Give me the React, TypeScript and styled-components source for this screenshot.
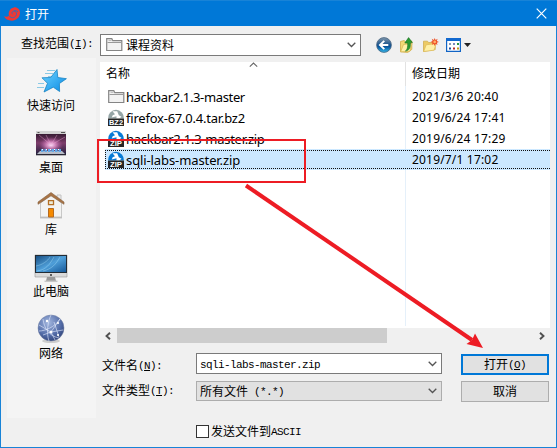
import React from "react";
import styled, { createGlobalStyle } from "styled-components";

const Global = createGlobalStyle`
  * { box-sizing: border-box; }
  html, body { margin: 0; padding: 0; overflow: hidden; }
  body { font: 12px/16px "Noto Sans CJK SC", sans-serif; color: #000; }
  svg { display: block; flex: none; }
`;

const Dialog = styled.div`
  position: relative;
  width: 557px;
  height: 448px;
  background: #f0f0f0;
  border: 1px solid #1883d7;
  border-top: 0;
  display: flex;
  flex-direction: column;
`;

const TitleBar = styled.header`
  height: 26px;
  margin: 0 -1px;
  border-top: 1px solid #1883d7;
  background: #0078d7;
  color: #fff;
  display: flex;
  align-items: center;
  padding: 0 10px 0 4px;
  flex: none;
`;

const Title = styled.span`
  flex: 1;
  margin-left: 4px;
`;

const Toolbar = styled.div`
  height: 32px;
  padding: 8px 0 0 20px;
  display: flex;
  flex: none;
`;

const LookLabel = styled.label`
  width: 79px;
  line-height: 18px;
  white-space: nowrap;
`;

const Combo = styled.div<{ $w: number; $h: number; $muted?: boolean }>`
  width: ${(p) => p.$w}px;
  height: ${(p) => p.$h}px;
  background: ${(p) => (p.$muted ? "#e1e1e1" : "#fff")};
  border: 1px solid ${(p) => (p.$muted ? "#adadad" : "#7a7a7a")};
  display: flex;
  align-items: center;
  padding: 0 4px 0 3px;
  flex: none;
`;

const ComboText = styled.span`
  flex: 1;
  white-space: pre;
  line-height: 16px;
`;

const PathValue = styled.span`
  flex: 1;
  display: flex;
  align-items: center;
  gap: 3px;
  padding-left: 2px;
`;

const Tools = styled.div`
  display: flex;
  gap: 7px;
  margin: 3px 0 0 15px;
  height: 16px;
`;

const Latin = styled.span`
  font-family: "Liberation Mono", monospace;
  font-size: 11px;
  line-height: 1;
  letter-spacing: -0.6px;
  vertical-align: 1px;
  white-space: pre;
  u { text-underline-offset: 1px; }
`;

const Body = styled.div`
  display: flex;
  gap: 4px;
  padding-left: 6px;
`;

const Places = styled.nav`
  width: 89px;
  height: 360px;
  background: #f4f4f4;
  padding: 7px 1px 0 0;
`;

const Place = styled.div`
  height: 62px;
  display: flex;
  flex-direction: column;
  align-items: center;
`;

const Content = styled.main`
  width: 450px;
  padding-top: 4px;
`;

const FileList = styled.div`
  height: 266px;
  background: linear-gradient(#e5f0fa, #e5f0fa) 305px 24px / 1px 240px no-repeat #fff;
`;

const ListHeader = styled.div`
  height: 24px;
  display: flex;
  padding-left: 6px;
  background: linear-gradient(#e2e2e2, #e2e2e2) 305px 0 / 1px 24px no-repeat;
`;

const HeadName = styled.div`
  width: 306px;
  display: flex;
  line-height: 22px;
  svg { margin: 0 0 0 119px; }
`;

const HeadDate = styled.div`
  line-height: 22px;
`;

const FileRow = styled.div<{ $selected?: boolean }>`
  height: 21px;
  margin-left: 5px;
  padding-left: 3px;
  display: flex;
  align-items: center;
  font: 13px/20px "Noto Sans", sans-serif;
  ${(p) =>
    p.$selected &&
    `background:
      repeating-linear-gradient(90deg, #111 0 1px, transparent 1px 2px) 0 1px / 100% 1px no-repeat,
      repeating-linear-gradient(90deg, #111 0 1px, transparent 1px 2px) 0 19px / 100% 1px no-repeat,
      repeating-linear-gradient(180deg, #111 0 1px, transparent 1px 2px) 0 1px / 1px 18px no-repeat,
      #cce8ff;`}
`;

const IconCell = styled.span`
  width: 18px;
  flex: none;
`;

const FileName = styled.span<{ $spacing: number }>`
  width: 286px;
  white-space: nowrap;
  letter-spacing: ${(p) => p.$spacing}px;
`;

const FileDate = styled.span`
  font-size: 12px;
  letter-spacing: 0.18px;
  white-space: nowrap;
`;

const Scrollbar = styled.div`
  height: 15px;
  display: flex;
  align-items: center;
  padding: 0 5px;
`;

const Thumb = styled.div`
  width: 270px;
  height: 15px;
  background: #cdcdcd;
  margin: 0 auto 0 6px;
`;

const Form = styled.div`
  display: grid;
  grid-template-columns: 96px 265px 89px;
  grid-template-rows: 28px 43px 14px;
  padding-top: 10px;
`;

const FieldLabel = styled.label<{ $top: number }>`
  padding: ${(p) => p.$top}px 0 0 2px;
  line-height: 16px;
  white-space: nowrap;
`;

const Button = styled.button<{ $primary?: boolean }>`
  width: 88px;
  height: 21px;
  margin: ${(p) => (p.$primary ? 1 : 0)}px 0 0;
  padding: 0 0 1px;
  background: #e1e1e1;
  border: ${(p) => (p.$primary ? "2px solid #0078d7" : "1px solid #adadad")};
  font: 12px/16px "Noto Sans CJK SC", sans-serif;
  color: #000;
`;

const CheckLabel = styled.label`
  grid-column: 2;
  display: flex;
  align-items: center;
  gap: 2px;
  white-space: nowrap;
`;

const CheckBox = styled.span`
  width: 13px;
  height: 13px;
  background: #fff;
  border: 1px solid #333;
`;

const Annotation = styled.svg`
  position: absolute;
  left: -1px;
  top: 0;
  pointer-events: none;
`;

const Chevron = () => (
  <svg width="9" height="6" viewBox="0 0 9 6">
    <path d="M.7 .8 4.5 4.5 8.3 .8" fill="none" stroke="#555" strokeWidth="1.3" />
  </svg>
);

const Folder = () => (
  <svg width="17" height="16" viewBox="0 0 17 16">
    <path d="M.7 13.5V1.7h5.1l1 2h9v9.8z" fill="#f2f2f2" stroke="#858585" strokeWidth="1.2" />
    <path d="M1.5 5.5h13.8" stroke="#999" />
    <path d="M2.5 3.4h3" stroke="#bbb" />
  </svg>
);

const Archive = ({ kind, color }: { kind: string; color: string }) => (
  <svg width="16" height="17" viewBox="0 0 16 17">
    <path d="M.3 9.5A7.8 7.8 0 0 1 8 .8 7.8 7.8 0 0 1 15.7 9.5z" fill={color} />
    <path d="M4.5 2.2h4.7l1.600 4 2.700 1.600-2.500 2H8.500V7.300L3.700 8.500l1-2.200 2.300-1z" fill="#fff" />
    <path d="M0 9.500h16V17H0z" fill="#262626" />
    <text x="8" y="15.900" textAnchor="middle" fontFamily="Liberation Sans" fontWeight="700" fontSize="7.500" fill="#fff" textLength={kind === "ZIP" ? 12 : 14} lengthAdjust="spacingAndGlyphs">
      {kind}
    </text>
  </svg>
);

const AppLogo = () => (
  <svg width="17" height="14" viewBox="0 0 17 14">
    <path d="M0 9.3C1.8 10 3.7 9.8 5 8.8 3.9 5.5 5.8 1 10 .4c3.300-.4 6 2 6 5.300 0 4.300-3.700 8-8.200 8C4 13.700 1.200 12 0 9.300z" fill="#ef3834" />
    <path d="M5.4 8.9c1.500 2.600 5.200 2.300 6.700-.4 1.200-2.300-.4-4.800-2.500-4.400-1.700.4-2.100 2.300-.8 3.200M9.800 4c1.500-.8 3.200-.3 4.200 1" fill="none" stroke="#2d6fba" strokeWidth=".9" />
  </svg>
);

const CloseIcon = () => (
  <svg width="11" height="11" viewBox="0 0 11 11">
    <path d="M.7 .7 10.3 10.3M10.3 .7 .7 10.3" stroke="#fff" strokeWidth="1.2" />
  </svg>
);

const BackIcon = () => (
  <svg width="16" height="16" viewBox="0 0 16 16">
    <defs>
      <linearGradient id="back" x2="0" y2="1">
        <stop stopColor="#8298ad" />
        <stop offset=".45" stopColor="#22598f" />
        <stop offset=".6" stopColor="#07539b" />
        <stop offset="1" stopColor="#35b9ec" />
      </linearGradient>
    </defs>
    <circle cx="8" cy="8" r="7.4" fill="url(#back)" stroke="#4b6680" strokeWidth=".8" />
    <path d="M8.3 3.9 4 8l4.3 4.1M4.7 8h7.6" fill="none" stroke="#fff" strokeWidth="2" />
  </svg>
);

const UpIcon = () => (
  <svg width="16" height="16" viewBox="0 0 16 16">
    <path d="M1.5 14.8V4.5l3.8-1 1 1.5 6.5-1v8.4l-4 3z" fill="#f3d976" stroke="#cfac48" strokeWidth=".8" />
    <path d="M1.6 14.8 4.5 7.5l8.5-1-2.3 8z" fill="#fff0a8" stroke="#d5b34c" strokeWidth=".7" />
    <path d="M6.4 14c2.100-1.300 2.400-4 2.300-8H5.800L9.600 .6 13.400 5.600h-2c.2 4.800-.8 8-5 8.400z" fill="#2c9931" stroke="#15701e" strokeWidth=".6" />
  </svg>
);

const NewIcon = () => (
  <svg width="17" height="16" viewBox="0 0 17 16">
    <path d="M1.5 14.5V4.2h4l1 1.3h6.7v7.1z" fill="#edca64" stroke="#d1ae52" strokeWidth=".8" />
    <path d="M1.6 14.5 4.2 7.8l10-1.3-2.2 6.7z" fill="#fff0a6" stroke="#dbb957" strokeWidth=".7" />
    <path d="m12.7 1 .9 2 2-1.2-.8 2.2 2.1.9-2.1.8.8 2.1-2-.9-.9 2-.9-2-2 .9.8-2.1-2.1-.8 2.1-.9-.8-2.2 2 1.2z" fill="#ee5126" />
    <circle cx="12.7" cy="4.9" r="1.3" fill="#ffb268" />
  </svg>
);

const ViewIcon = () => (
  <svg width="26" height="16" viewBox="0 0 26 16">
    <path d="M.6 1.6h13.8v12.8H.6z" fill="#fff" stroke="#1164c5" strokeWidth="1.2" />
    <path d="M0 1h15v3H0z" fill="#1269cf" />
    <path d="M3 6h2v2H3z" fill="#8a99b4" /><path d="M7 6h2v2H7z" fill="#7989be" /><path d="M11 6h2v2h-2z" fill="#279642" />
    <path d="M3 10.5h2v2H3z" fill="#174ea4" /><path d="M7 10.5h2v2H7z" fill="#b32c2c" /><path d="M11 10.5h2v2h-2z" fill="#c49916" />
    <path d="M18 6h7l-3.500 4z" fill="#222" />
  </svg>
);

const StarIcon = () => (
  <svg width="32" height="32" viewBox="0 0 32 32">
    <defs>
      <linearGradient id="star" x2="1" y2="1">
        <stop stopColor="#70d5ff" />
        <stop offset="1" stopColor="#0789e5" />
      </linearGradient>
    </defs>
    <path d="M12 5.5h8M10 8.5h8M13 11.5h3M3 18.5h6M2 22.5h7" stroke="#8bc9e5" strokeWidth="1" />
    <path d="m22 4.500.8 8 8.600 1.200-7 4.800.2 8-6.300-4.300-9.300 4.800 3.500-8.700-5.500-5.500 8.700-.3z" fill="url(#star)" stroke="#1683c3" strokeWidth=".8" />
  </svg>
);

const DesktopIcon = () => (
  <svg width="32" height="32" viewBox="0 0 32 32">
    <defs>
      <linearGradient id="sky" x2="0" y2="1">
        <stop stopColor="#201020" />
        <stop offset=".5" stopColor="#7d3c6b" />
        <stop offset="1" stopColor="#20203d" />
      </linearGradient>
      <radialGradient id="glow">
        <stop stopColor="#ffe6ff" />
        <stop offset=".4" stopColor="#e291c9" stopOpacity=".8" />
        <stop offset="1" stopColor="#b057a0" stopOpacity="0" />
      </radialGradient>
    </defs>
    <path d="M1 4h30v24H1z" fill="url(#sky)" />
    <ellipse cx="16" cy="18" rx="12" ry="8" fill="url(#glow)" />
    <path d="M16 18 4 8M16 18 11 8M16 18 22 8M16 18 30 10" stroke="#efa6d5" strokeWidth=".8" opacity=".5" />
    <path d="M1 4h30v3H1z" fill="#d2d2d2" />
    <path d="M2.5 5.5h2M26 5.5h4" stroke="#555" />
    <path d="M5 24h22l3 3H2z" fill="#b8bdc8" />
    <path d="M6 23.5h20" stroke="#62a8e8" strokeWidth="3" strokeDasharray="2.5 1" />
    <path d="M7 22.5h19" stroke="#fff" strokeWidth="1" strokeDasharray="1 3" />
    <path d="M1 27h30v1.3H1z" fill="#292735" />
  </svg>
);

const HouseIcon = () => (
  <svg width="32" height="32" viewBox="0 0 32 32">
    <path d="M5 28.8h22" stroke="#aaa" strokeWidth="1" />
    <path d="M22 6h4v8h-4z" fill="#eee" stroke="#c2c2c2" />
    <path d="M5.5 14 16 5.5 26.5 14v14h-21z" fill="#f3f3f2" stroke="#bdbdbb" strokeWidth=".8" />
    <path d="m3 15.300 13-8.500 13 8.500V13L16 3.500 3 13z" fill="#a87345" stroke="#85603e" strokeWidth=".6" />
    <path d="M13.5 11.7h5v4h-5z" fill="#ececda" stroke="#b36f26" strokeWidth="1.3" />
    <path d="M13.5 19.5h5v8.5h-5z" fill="#f58a00" stroke="#b56b20" />
  </svg>
);

const ComputerIcon = () => (
  <svg width="34" height="32" viewBox="0 0 34 32">
    <defs>
      <linearGradient id="pc" x2="1" y2="1">
        <stop stopColor="#184f83" />
        <stop offset=".5" stopColor="#4f9fd9" />
        <stop offset="1" stopColor="#16599a" />
      </linearGradient>
    </defs>
    <path d="M1 4h32v22H1z" fill="#dadada" stroke="#999" strokeWidth=".6" />
    <path d="M1 4h32v18H1z" fill="#222c35" />
    <path d="M2 5h30v16H2z" fill="url(#pc)" />
    <path d="M3 20C12 19 16 13 20 6M9 20C18 18 22 13 26 6M2 15C8 14 14 10 16 6" fill="none" stroke="#a9e0fa" opacity=".4" />
    <circle cx="17" cy="24" r="1" fill="#333" />
    <path d="M13 26h8l1 4H12z" fill="#999" />
    <path d="M10.5 30.3h13" stroke="#c7c7c7" strokeWidth="1.5" />
  </svg>
);

const GlobeIcon = () => (
  <svg width="32" height="32" viewBox="0 0 32 32">
    <defs>
      <radialGradient id="globe" cx=".4" cy=".3" r=".8">
        <stop stopColor="#a3b7df" />
        <stop offset=".6" stopColor="#546da8" />
        <stop offset="1" stopColor="#28396d" />
      </radialGradient>
    </defs>
    <ellipse cx="16" cy="28" rx="9" ry="2" fill="#ccc" />
    <circle cx="16" cy="15" r="13" fill="url(#globe)" stroke="#7583a4" strokeWidth=".5" />
    <g fill="none" stroke="#e6edff" strokeWidth=".8" opacity=".75">
      <path d="M4 18C10 18 20 14 25 6M8 6C9 15 14 23 24 25M4 12 16 19 28 17M16 2C13 8 11 20 14 28M8 22 16 19 25 6M16 19 20 27M19 9 24 24" />
    </g>
    <g fill="#fff"><circle cx="16" cy="19" r="1.5" /><circle cx="12" cy="8" r="1.2" /><circle cx="23" cy="10" r="1.1" /><circle cx="23" cy="22" r="1.1" /></g>
  </svg>
);

const places = [
  { label: "快速访问", Icon: StarIcon },
  { label: "桌面", Icon: DesktopIcon },
  { label: "库", Icon: HouseIcon },
  { label: "此电脑", Icon: ComputerIcon },
  { label: "网络", Icon: GlobeIcon },
];

const files = [
  { name: "hackbar2.1.3-master", date: "2021/3/6 20:40", icon: <Folder />, spacing: -0.36 },
  { name: "firefox-67.0.4.tar.bz2", date: "2019/6/24 17:41", icon: <Archive kind="BZ2" color="#95a5a6" />, spacing: -0.22 },
  { name: "hackbar2.1.3-master.zip", date: "2019/6/24 17:29", icon: <Archive kind="ZIP" color="#087bd5" />, spacing: -0.26 },
  { name: "sqli-labs-master.zip", date: "2019/7/1 17:02", icon: <Archive kind="ZIP" color="#087bd5" />, spacing: -0.1, selected: true },
];

export default function App() {
  return (
    <>
      <Global />
      <Dialog>
        <TitleBar>
          <AppLogo />
          <Title>打开</Title>
          <CloseIcon />
        </TitleBar>
        <Toolbar>
          <LookLabel>查找范围<Latin>(<u>I</u>):</Latin></LookLabel>
          <Combo $w={261} $h={22}>
            <PathValue><Folder />课程资料</PathValue>
            <Chevron />
          </Combo>
          <Tools><BackIcon /><UpIcon /><NewIcon /><ViewIcon /></Tools>
        </Toolbar>
        <Body>
          <Places>
            {places.map(({ label, Icon }) => (
              <Place key={label}><Icon />{label}</Place>
            ))}
          </Places>
          <Content>
            <FileList>
              <ListHeader>
                <HeadName>
                  名称
                  <svg width="9" height="6" viewBox="0 0 9 6">
                    <path d="M.8 4.7 4.5 1 8.2 4.7" fill="none" stroke="#666" strokeWidth="1.1" />
                  </svg>
                </HeadName>
                <HeadDate>修改日期</HeadDate>
              </ListHeader>
              {files.map((f) => (
                <FileRow key={f.name} $selected={f.selected}>
                  <IconCell>{f.icon}</IconCell>
                  <FileName $spacing={f.spacing}>{f.name}</FileName>
                  <FileDate>{f.date}</FileDate>
                </FileRow>
              ))}
            </FileList>
            <Scrollbar>
              <svg width="6" height="8" viewBox="0 0 6 8"><path d="M5 .7 1.5 4 5 7.3" fill="none" stroke="#505050" strokeWidth="1.9" /></svg>
              <Thumb />
              <svg width="6" height="8" viewBox="0 0 6 8"><path d="M1 .7 4.5 4 1 7.3" fill="none" stroke="#505050" strokeWidth="1.9" /></svg>
            </Scrollbar>
            <Form>
              <FieldLabel $top={4}>文件名<Latin>(<u>N</u>):</Latin></FieldLabel>
              <Combo $w={246} $h={21}>
                <ComboText><Latin>sqli-labs-master.zip</Latin></ComboText>
                <Chevron />
              </Combo>
              <Button $primary>打开<Latin>(<u>O</u>)</Latin></Button>
              <FieldLabel $top={1}>文件类型<Latin>(<u>T</u>):</Latin></FieldLabel>
              <Combo $w={246} $h={20} $muted>
                <ComboText>所有文件<Latin> (*.*)</Latin></ComboText>
                <Chevron />
              </Combo>
              <Button>取消</Button>
              <CheckLabel><CheckBox /><span>发送文件到<Latin>ASCII</Latin></span></CheckLabel>
            </Form>
          </Content>
        </Body>
        <Annotation width="557" height="448" viewBox="0 0 557 448">
          <path d="M98 140h207v42H98z" fill="none" stroke="#ed1c24" strokeWidth="2" />
          <path d="M246 185.5 472 340" stroke="#ed1c24" strokeWidth="4" />
          <path d="M483 348 475 333.500 472 340 466.500 344z" fill="#ed1c24" />
        </Annotation>
      </Dialog>
    </>
  );
}
